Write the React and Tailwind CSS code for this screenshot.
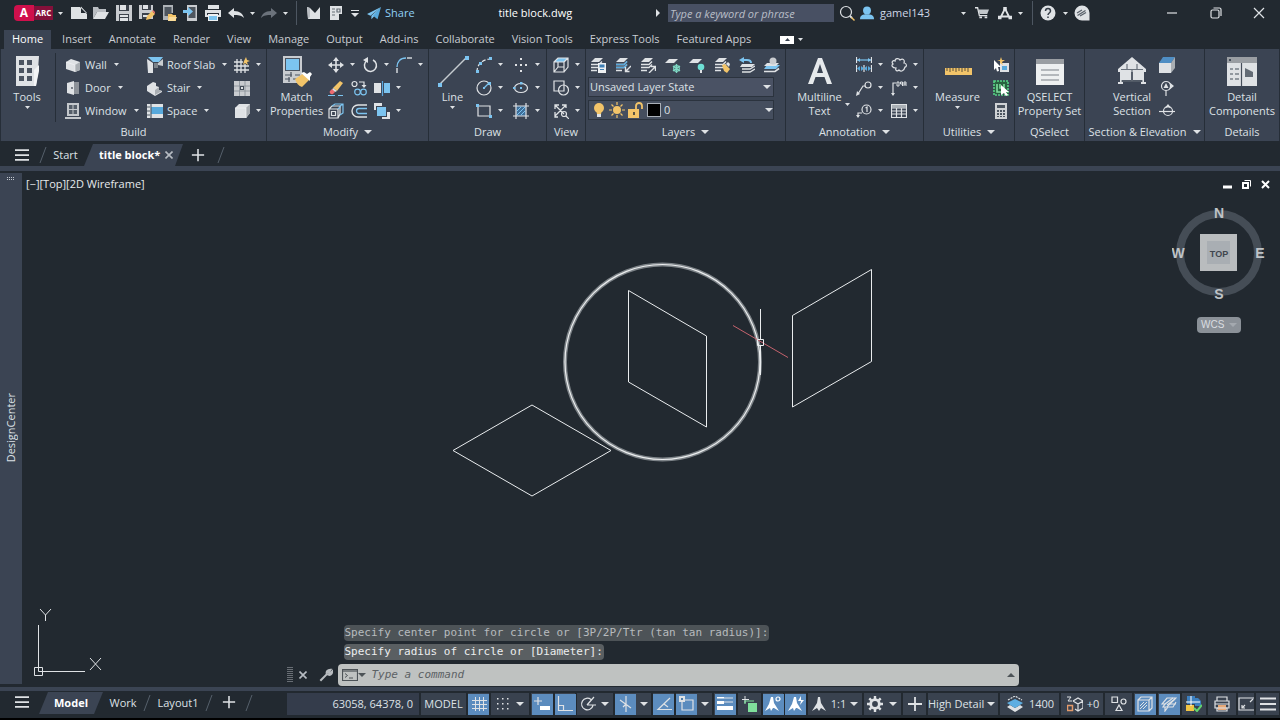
import { useState } from 'react';

const LIGHT = '#dfe2e5';
const BLUE = '#7cc4f0';
const GOLD = '#f2c469';

const F = ({ d, c = LIGHT }) => <path d={d} fill={c} stroke="none" />;
const S = ({ d, c = LIGHT, w = 1.2 }) => <path d={d} fill="none" stroke={c} strokeWidth={w} />;
const C = ({ x, y, r, c = LIGHT, f = 'none' }) => <circle cx={x} cy={y} r={r} stroke={c} fill={f} strokeWidth={1.2} />;

const layerStack = (
  <>
    <F d="M5 1h8L9 5H1z" />
    <S d="M1 7.500h8l3-3M1 10.500h8l3-3M1 13.500h6" w={1.4} />
  </>
);

// 16 x 16 artwork
const icons = {
  newFile: <F d="M0 2h9l7 7v5H0zM10 1.500v6.500h6z" />,
  open: <><F d="M0 14V2h5l1 2h7v3H4z" c="#b9bdc2" /><F d="M4 7h12l-4 7H0z" /></>,
  save: <><F d="M0 0h16v16H0z" c="#c9ccd0" /><F d="M3 0h10v6H3zM3 9h10v7H3z" c="#3c424b" /><F d="M4 0h6v5H4zM4 10h8v2H4zM4 13h8v3H4z" /></>,
  saveAs: <><F d="M0 0h14v14H0z" c="#c9ccd0" /><F d="M3 0h9v5H3zM3 8h8v6H3z" c="#3c424b" /><F d="M4 0h5v4H4zM4 10h5v2H4z" /><F d="M7 15l1-4 5-5 3 3-5 5z" c={GOLD} /><F d="M13 6l1-1 3 3-1 1z" c="#e8746c" /></>,
  openWeb: <><F d="M2 0h10v8H8v7H2z" c="#aeb3b8" /><F d="M3.500 2h7v9h-7z" c="#4e565f" /><F d="M7 9h4l1 1h3v6H7z" c={GOLD} /><F d="M8 12h8l-2 4H7z" c="#f9dc9b" /></>,
  saveWeb: <><F d="M4 0h10v16H4z" c="#c9ccd0" /><F d="M5.500 2h7v11h-7z" c="#4e565f" /><F d="M0 5h5V2l5 4.500L5 11V8H0z" c={BLUE} /></>,
  print: <><F d="M3 0h11v4H3zM0 5h16v7H0z" /><F d="M2 8h12v2H2z" c="#2b323b" /><F d="M3 9h10v7H3z" c="#eef1f3" /><F d="M4 11h8v4H4z" c={BLUE} /></>,
  undo: <F d="M0 8l6-5v3c6 0 9 3 10 7-3-3-6-3-10-3v3z" />,
  redo: <F d="M16 8l-6-5v3C4 6 1 9 0 13c3-3 6-3 10-3v3z" c="#6b727b" />,
  ribbonM: <><F d="M1 2l3 1 5 5 5-6v12H2z" /><F d="M1 2l3 1v9l-2 2z" c="#b9bdc2" /></>,
  sheet: <><F d="M2 1h12v8h-3v6H2z" /><S d="M4 4h3M4 7h3M4 10h3M9 4h3v3H9z" c="#666e77" /></>,
  share: <><F d="M16 1L0 9l4 2zM16 1L5 11v4l3-3z" c={BLUE} /><F d="M16 1L7 11l5 4z" c="#58a9dc" /></>,
  search: <><C x={7} y={7} r={5.5} /><S d="M11 11l2 2" w={2} /><F d="M13 12l3 3-1 1-3-3z" c={GOLD} /></>,
  user: <><circle cx="8" cy="5" r="4.500" fill={BLUE} stroke="none" /><F d="M0 15c0-4 3-5.500 8-5.500s8 1.500 8 5.500z" c={BLUE} /></>,
  cart: <><S d="M0 2h3l2 9h9" w={1.5} /><F d="M4 4h12l-2 5H5z" c="#c2c7cb" /><F d="M5 12h3v2H5zM11 12h3v2h-3z" /></>,
  autodesk: <><S d="M8 3L3 13M8 3l5 10M3 12h10" w={2.2} /><F d="M6 1h4v4H6zM0 11h4v4H0zM12 11h4v4h-4z" /></>,
  help: <><circle cx="8" cy="8" r="7.500" fill={LIGHT} stroke="none" /><S d="M5.500 6c0-3.500 5-3.500 5 0 0 2-2.500 2-2.500 4M8 11.500v1.500" c="#343c46" w={1.5} /></>,
  community: <><F d="M8 0.500a7.500 7.500 0 0 1 7.500 7.500v7.500H8a7.500 7.500 0 0 1 0-15z" /><S d="M3 8l5-3M3.500 10.500l8-5M6 11l6-3.500" c="#5a626b" w={1.4} /></>,
  minimize: <S d="M3 8h10" />,
  restore: <><rect x="3" y="5" width="8" height="8" rx="1.500" /><S d="M5.500 3h6c1 0 1.500.5 1.500 1.500V11" /></>,
  close: <S d="M3 3l10 10M13 3L3 13" />,
  wall: <><F d="M1 5l5-3 9 3v8l-5 2-9-3z" /><F d="M10 8l5-3v8l-5 2z" c="#a9aeb3" /><S d="M1 5l9 3v7" c="#f3f4f5" w={0.6} /></>,
  door: <><F d="M6 2h8v12H6z" c="#8d9299" /><F d="M2 3l7-2v14l-7-2z" /><circle cx="7" cy="8" r="0.900" fill="#4b535e" stroke="none" /></>,
  window: <><F d="M2 0h12v13H2zM0 14h16v2H0z" c="#c3c7cb" /><F d="M4 2h3.500v4H4zM8.500 2H12v4H8.500zM4 7h3.500v4H4zM8.500 7H12v4H8.500z" c="#555e69" /></>,
  roof: <><F d="M1 0h15l-4 5H6z" c={BLUE} /><F d="M0 2l6 4v10H1z" /><F d="M7 6h4v5H7z" c="#7b828a" /><F d="M11 6l5-4v7l-5-1z" c="#c9cdd0" /></>,
  stair: <><F d="M0 6l6-4 3 1v3l3 1v3l3 1v1l-7 4-8-5z" /><F d="M8 10l4-3v3l3 1-7 4z" c="#a9aeb3" /></>,
  space: <><F d="M0 1h16v14H0z" /><F d="M4 4h12v7H4z" c="#58a9dc" /><S d="M4 1v14" c="#555e69" /><S d="M0 4h3M0 8h3M0 12h3" c="#555e69" /></>,
  gridBolt: <><S d="M3 2v14M7 2v14M11 7v9M0 5h9M0 9h15M0 13h15" w={1.3} /><F d="M12 0l1 3 3 1-3 1 1 3-3-2-2 2 1-4z" c={GOLD} /></>,
  ceiling: <><F d="M0 1h16v15H0z" c="#c9ccd0" /><S d="M5.500 1v15M11 1v15M0 6h16M0 11h16" c="#878e96" w={0.8} /><F d="M6 6h4v4H6z" c="#454e5a" /><F d="M7 7h2v2H7z" /></>,
  box: <><F d="M1 5l4-4h11v9l-4 5H1z" /><F d="M12 5l4-4v9l-4 5z" c="#a9aeb3" /><S d="M1 5h11v10" c="#f4f5f6" w={0.7} /></>,
  move: <><S d="M8 2v12M2 8h12" w={1.6} /><F d="M8 0l3 4H5zM8 16l3-4H5zM0 8l4-3v6zM16 8l-4-3v6z" /></>,
  rotate: <><S d="M5 3.500A6 6 0 1 0 11 3" w={1.5} /><F d="M6 0v6L1 3z" /></>,
  fillet: <><S d="M1 16v-5" w={1.4} /><S d="M1 10C1 5 4 1 10 1" c={BLUE} w={1.4} /><S d="M11 1h5" w={1.4} /></>,
  erase: <><F d="M5 8l7-7 3 2-6 8z" c={GOLD} /><F d="M5 8l4 3-2 1-3-2z" /><F d="M4 9l3 3-2 2c-3 1-4-2-3-3z" c="#ee6a70" /><S d="M0 15.500h7M10 15.500h5" c={BLUE} w={1} /></>,
  copy: <><C x={3.5} y={4} r={2.5} /><S d="M8 2h5v3" /><F d="M10.500 5h5L13 8z" /><C x={6.500} y={12} r={2.8} c={BLUE} /><C x={12.500} y={12} r={2.8} c={BLUE} /></>,
  mirror: <><F d="M0 3h7v10H0z" /><F d="M10 3h6v10h-6z" c={BLUE} /><S d="M8.500 1v15" c="#5aa6db" /></>,
  explode: <><S d="M1 6h9v9H1zM1 6l3-3h8v8l-2 4M3.500 8.500h4v4h-4z" /><S d="M4 3l3-2h8v9l-3 2M12 3l3-2M10 6l3-3" c={BLUE} /></>,
  offset: <><S d="M16 2H7a5.500 5.500 0 0 0 0 12h9" w={1.4} /><S d="M16 5.500H8a2.500 2.500 0 0 0 0 5h8" c={BLUE} w={1.3} /></>,
  order: <><F d="M0 0h8v7H0zM8 9h8v7H8z" /><F d="M2 3h11v11H2z" c="#3b4453" /><F d="M3 4h9v9H3z" c={BLUE} /></>,
  arc: <><path d="M1 15C1 8 5 3 14 2" strokeDasharray="4 2" /><F d="M0 13h3v3H0zM3 5h3v3H3zM13 0h3v3h-3z" c={BLUE} /></>,
  points: <F d="M7 1h2v2H7zM2 7h2v2H2zM12 7h2v2h-2zM7 13h2v2H7zM7 7h2v2H7z" />,
  circle: <><C x={8} y={8} r={7} /><F d="M7 7h2v2H7zM12 2h3v3h-3z" c={BLUE} /><S d="M8 8l5-5" c={BLUE} /></>,
  ellipse: <><ellipse cx="8" cy="8" rx="6.500" ry="4.500" /><F d="M7 7h2v2H7zM0 7h2.500v2H0zM7 2h2.500v2.500H7z" c={BLUE} /></>,
  rect: <><S d="M2 3h12v10H2z" /><F d="M0 1h3v3H0zM13 12h3v3h-3z" c={BLUE} /></>,
  hatch: <><F d="M3 3h10v10H3z" c="#3f6f9a" /><S d="M3 0v16M13 0v16M0 3h16M0 13h16" /><S d="M4 8l4-4M4 12l8-8M8 12l4-4" c={BLUE} w={1} /></>,
  cube: <><F d="M1 5l4-4h10l-4 4z" c={BLUE} /><S d="M1 5h10v10H1zM1 5l4-4h10v9l-4 5M15 1l-4 4M5 5v5h6M5 10l-4 5" /></>,
  region: <><S d="M1 1h10v10H1z" /><C x={10.500} y={10} r={5} /></>,
  extents: <><S d="M2 2l9 9M13 2L2 13M2 6V2h4M9 2h4v3M2 9v5h3" w={1.3} /><C x={11} y={11} r={2.5} /><S d="M13 13l3 3" /></>,
  layerProps: <>{layerStack}<F d="M8 6h8v10H8z" c="#eef0f2" /><F d="M9.500 7.500h5v3h-5zM10 12h4v1h-4z" c="#3f7fb5" /></>,
  layerOff: <>{layerStack}<S d="M1 7.500h8l3-3M1 10.500h8l3-3" c="#58a9dc" w={1.4} /><S d="M16 9l-5 5M10.500 10v4.500h4" w={1.4} /></>,
  layerOn: <>{layerStack}<S d="M9 16l6-6M11 9.500h4.500V14" w={1.4} /></>,
  layerFreeze: <><F d="M4 2h9L9 6H0z" /><S d="M11.500 7v9M8 9l7 5M15 9l-7 5" c="#7fd8c4" w={1.4} /><C x={11.5} y={11.5} r={2.8} c="#7fd8c4" /></>,
  layerBulb: <><F d="M4 2h9L9 6H0z" /><circle cx="12" cy="10" r="3.300" fill="#6ee0d6" stroke="none" /><F d="M11 13h2v3h-2z" /></>,
  layerMatch: <>{layerStack}<F d="M8 8l3-1 5 5-3 4-3-2z" c={GOLD} /><F d="M12 7l2-2 2 2-1 3z" /></>,
  layerPrev: <><F d="M3 7h13l-3 3H1z" /><S d="M3 12h8l5-3M3 15h8l5-3" w={1.4} /><S d="M2 3h6c3 0 4 1 4 3" c={BLUE} w={2} /><F d="M5 0v6L0 3z" c={BLUE} /></>,
  layerIso: <><S d="M0 14.500h11l4-3" w={1.6} /><F d="M3 8h13l-4 4H0z" c={BLUE} /><F d="M3 6h12l-3 3H0z" /><circle cx="9" cy="4" r="3.500" fill="#c9ccd0" stroke="none" /></>,
  bulb: <><circle cx="8" cy="6" r="5" fill={GOLD} stroke="none" /><F d="M5 8h6l-1 4H6z" c={GOLD} /><F d="M6 12h4v3H6z" /></>,
  sun: <><circle cx="8" cy="8" r="4" fill={GOLD} stroke="none" /><S d="M8 0v3M8 13v3M0 8h3M13 8h3M2.500 2.500l2 2M11.500 11.500l2 2M2.500 13.500l2-2M11.500 4.500l2-2" c={GOLD} /></>,
  unlock: <><F d="M1 7h11v9H1z" c={GOLD} /><S d="M9 7V4c0-4 6-4 6 0v3" c={GOLD} w={1.8} /><F d="M6 10h2v3H6z" c="#5a5342" /></>,
  dim: <><S d="M0 3h16" c={BLUE} /><F d="M4 1v4L1 3zM12 1v4l3-2z" c={BLUE} /><S d="M.5 0v6M15.500 0v6M.5 8v7M15.500 8v7M8 8v7" /><F d="M4 9v5l-3-2.500zM12 9v5l3-2.500zM5 9v5l3-2.500zM11 9v5l-3-2.500z" c="#58a9dc" /></>,
  leader: <><C x={12} y={5} r={3} /><S d="M9 6H7l-5 8" /><F d="M0 16l1-5 3 3z" /></>,
  balloon: <><C x={10.500} y={6.500} r={4.5} /><S d="M9.500 5l1.500-1v5M2 14v-4h4" /><F d="M0 12h4l-2 3z" /></>,
  cloud: <S d="M4 4c0-3 4-3 5-1 3-2 5 0 4 3 3 0 3 4 1 4-1 4-4 5-6 3-2 2-4 0-3-2C1 11 0 8 2 7 0 5 2 3 4 4z" />,
  keynote: <><S d="M2 15V3h3" /><F d="M0 13h4l-2 3z" /><S d="M6 2h2v4H6zM9.500 2h2v4M9.500 2v2h2M13 6V2h2v4M13 4h2" w={1} /></>,
  table: <><S d="M0.500 1.500h15v13H.5zM.5 5h15M.5 8h15M.5 11h15M5.500 5v9.500M10.500 5v9.500" /><F d="M1 2h14v3H1z" c="#aab0b6" /></>,
  quickSelect: <><F d="M7 6h9v9H7z" /><F d="M9 9h5v4H9z" c="#58a9dc" /><F d="M1 3l7 7H5l1 4-2 .5L3 11l-2 2z" c="#fff" /><F d="M8 0l1 3h3l-3 2 1 3-3-2 0-2-3 0 3-1z" c={GOLD} /></>,
  selectAll: <><F d="M1 1h14v13H1z" c="#28633f" /><path d="M1 1h14v14H1z" stroke="#56d386" strokeWidth="1.600" strokeDasharray="2 1" /><S d="M4 4v8h5M7 4v4h4V4" c="#7fdc9f" w={1.6} /><F d="M8 5l8 7-3 0 2 3-2 1-2-3-3 2z" c="#fff" /></>,
  calc: <><F d="M2 0h12v16H2z" c="#cfd2d5" /><F d="M4 2h8v3H4zM4 7h2v2H4zM7 7h2v2H7zM10 7h2v2h-2zM4 10h2v2H4zM7 10h2v2H7zM10 10h2v2h-2zM4 13h2v1H4zM7 13h2v1H7zM10 13h2v1h-2z" c="#4c5560" /></>,
  sectionBox: <><F d="M0 6h12v10H0z" /><F d="M0 6l4-6h12l-4 6z" c="#4f8ec4" /><F d="M12 6l4-6v11l-4 5z" c="#a9aeb3" /></>,
  mark: <><C x={7} y={6} r={4.5} /><F d="M9 1l6 5-6 5c3-3 3-7 0-10z" /><F d="M4.500 8L7 3l2.500 5z" /><S d="M7 10.500V16" /></>,
  elevMark: <><C x={9} y={8} r={4.5} /><S d="M0 8.500h16" /><F d="M5 6l4-5 4 5c-3-2-5-2-8 0z" /></>,
  wrench: <S d="M1.500 14.500L9 7M9 7c-1-3 1-5 4-5l-2 3 1.500 1.500L15 4c0 3-2 5-6 3z" c="#b7bbbf" w={2.4} />,
  console: <><S d="M.5 2.500h15v11H.5z" c="#4d5357" /><S d="M1 4h14" c="#4d5357" /><S d="M3 6.500l2.500 2L3 10.500M7 11h4" c="#4d5357" w={1} /></>,
  stGrid: <S d="M4.500 1v14M8.500 1v14M12.500 1v14M1 4.500h15M1 8.500h15M1 12.500h15" w={1} />,
  stSnap: <F d="M2 2h1.500v1.500H2zM7 2h1.500v1.500H7zM12 2h1.500v1.500H12zM2 7h1.500v1.500H2zM7 7h1.500v1.500H7zM12 7h1.500v1.500H12zM2 12h1.500v1.500H2zM7 12h1.500v1.500H7zM12 12h1.500v1.500H12z" />,
  stDyn: <><S d="M4 1v8M0 5h8" /><F d="M6 10h10v4H6z" c="#fff" /></>,
  stOrtho: <S d="M1.500 0v14.500H16M1.500 9.500h5v5" />,
  stPolar: <S d="M13 9.500A5.800 5.800 0 1 1 11 3.500M7 9h9M7 9l7-8" />,
  stIso: <S d="M8 0v16M2 4l11 8M8 8l-3 3" />,
  stTrack: <S d="M14 2L2 13.500h14M8 8l4 3" />,
  stSnapObj: <><S d="M4 4h10v10H3V6" /><F d="M0 0h6v6H0z" /><F d="M2 2h2v2H2z" c="#4f7fae" /></>,
  stWeight: <><F d="M0 1h7v1.500H0zM0 5h7v3H0zM0 10h16v4H0z" c="#fff" /><S d="M7 2h9M7 6h9" /></>,
  stTransp: <><S d="M3 0v7M0 3.500h7" w={1} /><S d="M3 8V5h9" c="#7fe09c" /><F d="M6 7h9v9H6z" c="#7fe09c" /></>,
  stAnno: <><F d="M6 1l2 0 1 6 5 8-5-3-1 0-2 3-1-3-5 3 4-7z" c="#fff" /><C x={13} y={3} r={2} c="#fff" /></>,
  stAnno2: <><F d="M6 1l2 0 1 6 5 8-5-3-1 0-2 3-1-3-5 3 4-7z" c="#fff" /><F d="M13 0l-3 5h3l-1 4 4-5h-3z" c="#fff" /></>,
  stAnno3: <F d="M7 1h2l1 6 5 8-5-3-2 3-2-3-5 3 5-8z" />,
  gear: <><circle cx="8" cy="8" r="4.300" stroke={LIGHT} strokeWidth="2.800" /><S d="M8 0v3M8 13v3M0 8h3M13 8h3M2.300 2.300l2 2M11.700 11.700l2 2M2.300 13.700l2-2M11.700 4.300l2-2" w={2.4} /></>,
  plus: <S d="M8 1v14M1 8h14" w={1.8} />,
  elevPlane: <><F d="M0 11l3-2 5 3 5-3 3 2-8 5z" /><F d="M0 7l8-4 8 4-8 5z" c="#5eaee2" /><path d="M1 4l7-4 7 4" strokeDasharray="2 1" /></>,
  replaceZ: <><S d="M6 5l5-3 5 3v7l-5 3-3-2M6 5l5 3 5-3M11 8v7" /><S d="M0 1h4L1 5h4" w={1} /><S d="M.5 9.500h5v5h-5z" c="#e29a6b" w={1.5} /></>,
  shapes: <><S d="M1 1h5.500v5.500H1zM8 9l3 5.500H5z" /><C x={12.500} y={5.500} r={2.500} /></>,
  hatchBox: <><S d="M1 4h11v11H1zM1 4l3-3h11v11l-3 3M12 4l3-3" /><S d="M3 10l4-4M3 13l7-7M6 13l4-4" w={1} /></>,
  surface: <><S d="M6 2h9L6 11H2l2-3H1z" /><S d="M4 8l8-6M6 9l8-6M15 6l-3 5H7l-3 4v-4M9 8h6" /></>,
  cad: <><F d="M1 0h8v8H1z" c="#3c7fbf" /><F d="M9 2h3l3 3v5H9z" c="#3c7fbf" /><F d="M0 9h8v6H0z" c="#f0c445" /><S d="M5 0v10M0 6h14" c="#fff" w={1} /><S d="M8 12l3 3 5-6" c="#62d46e" w={2} /></>,
  printer: <><S d="M3 5V1h10v4M1 5h14v7H1zM1 8h14" /><F d="M4 9h8v5H4z" c="#e6a877" /><S d="M3 12h10v3H3z" /></>,
  isolate: <><S d="M16 2H1v12h15" /><S d="M4 12l3-3M4 9v3h3M12 6l3-3" /></>,
  menu: <S d="M0 2.500h16M0 8h16M0 13.500h16" w={2} />,
};

// 32 x 32 artwork
const bigIcons = {
  tools: <><F d="M5 1h23l-1 14-2 16H5z" /><F d="M23 15l5-5v6l-3 15h-2z" c="#f4f5f6" /><F d="M8 5h5v5H8zM16 5h5v5h-5zM8 13h5v5H8zM16 13h5v5h-5zM8 21h5v5H8zM16 21h5v5h-5z" c="#4b5461" /></>,
  match: <><F d="M2 1h19v27H2z" c="#c9ccd0" /><F d="M4 3h15v13H4z" c="#4b5461" /><F d="M5 4h13v11H5z" c={BLUE} /><S d="M4 20h7M14 20h5M4 24h5M12 24h5M10 17v5M8 22v5" c="#4b5461" /><F d="M14 24l9-6 6 6-8 8c-3-1-6-4-7-8z" c={GOLD} /><F d="M20 18l3-1 3 2 3-2 2 2-2 3 0 4z" c="#fff" /></>,
  line: <><S d="M3 29L29 3" c="#c5cbd0" w={1.4} /><F d="M1 28h4v4H1zM28 1h4v4h-4z" c={BLUE} /></>,
  mtext: <path d="M4 29L14 3h4l10 26h-5l-2.500-7h-9L9 29zM13 18h6l-3-9z" fill="#e6e9ec" stroke="none" fillRule="evenodd" />,
  measure: <><F d="M3 13h27v7H3z" c={GOLD} /><S d="M5 13v3M8 13v4M11 13v3M14 13v4M17 13v3M20 13v4M23 13v3M26 13v4" c="#5c5038" w={1} /></>,
  qselect: <><F d="M2 4h28v26H2z" c="#eef0f1" /><F d="M2 4h28v5H2z" c="#9a9ea3" /><S d="M7 15h18M7 20h18M7 25h18" c="#7a8087" /></>,
  house: <><F d="M16 2l14 12v3h-2v10h2v2h-5v-2h1V17H6v10h1v2H2v-2h2V17H2v-3z" /><F d="M6 16h9v9H6zM17 16h9v9h-9z" /><S d="M5 14.500h22M11 9v6M21 9v6M16 15v11M5 26h22" c="#69717b" /></>,
  detail: <><F d="M1 2h30v29H1z" /><F d="M1 2h30v6H1z" c="#9a9ea3" /><F d="M3 4h2v2H3z" c="#454e5a" /><S d="M15.500 8v23" c="#454e5a" /><F d="M19 13l8 4v5h-8z" c="#636b75" /><S d="M4 14h3M9 14h4M4 19h3M9 19h4M4 24h3M9 24h4" c="#454e5a" /></>,
};

const sizes = { 14: 'size-3.5', 16: 'size-4' };

const Icon = ({ name, size = 16 }) => (
  <svg className={`${sizes[size]} shrink-0`} viewBox="0 0 16 16" fill="none" stroke={LIGHT} strokeWidth="1.200" aria-hidden="true">
    {icons[name]}
  </svg>
);

const Caret = ({ wide = false, color = LIGHT }) => (
  <svg className={wide ? 'h-1 w-2 shrink-0' : 'h-[3px] w-[5px] shrink-0'} viewBox="0 0 8 4" preserveAspectRatio="none" aria-hidden="true">
    <path d="M0 0h8L4 4z" fill={color} />
  </svg>
);

const IconButton = ({ name, label, width = 'w-[22px]', size }) => (
  <button aria-label={label || name} className={`flex h-5 shrink-0 items-center justify-center ${width}`}>
    <Icon name={name} size={size} />
  </button>
);

const CaretButton = ({ width = 'w-3' }) => (
  <button aria-label="More" className={`flex h-5 shrink-0 items-center justify-center ${width}`}>
    <Caret />
  </button>
);

const Divider = () => <span className="h-6 w-px shrink-0 bg-[#4d5661]" />;

const TitleBar = () => (
  <header className="flex h-[26px] shrink-0 items-center pl-3.5">
    <button className="flex h-4 items-center text-white">
      <span className="flex h-4 w-5 items-center justify-center rounded-l-sm bg-[#d0104c] text-xs font-bold">A</span>
      <span className="flex h-3.5 w-[19px] items-center justify-center bg-[#84103a] text-[8px] font-bold">ARC</span>
    </button>
    <CaretButton width="w-3.5" />
    <IconButton name="newFile" label="New" width="w-[23px]" />
    <IconButton name="open" label="Open" />
    <IconButton name="save" label="Save" width="w-[23px]" />
    <IconButton name="saveAs" label="Save As" width="w-[23px]" />
    <IconButton name="openWeb" label="Open from Web" />
    <IconButton name="saveWeb" label="Save to Web" />
    <IconButton name="print" label="Plot" />
    <IconButton name="undo" label="Undo" width="w-[23px]" />
    <CaretButton width="w-2.5" />
    <IconButton name="redo" label="Redo" width="w-[23px]" />
    <CaretButton width="w-2.5" />
    <span className="w-1.5" />
    <Divider />
    <span className="w-1.5" />
    <IconButton name="ribbonM" label="Project Navigator" />
    <IconButton name="sheet" label="Sheet Set Manager" />
    <button aria-label="Customize" className="flex w-4 flex-col items-center gap-0.5">
      <span className="h-px w-2 bg-[#dfe2e5]" />
      <Caret wide />
    </button>
    <a href="#share" className="ml-1 flex items-center gap-1 text-[#8fd0f5]">
      <Icon name="share" size={14} />
      Share
    </a>
    <h1 className="flex-1 text-center text-white">title block.dwg</h1>
    <svg className="mr-2 h-2 w-1" viewBox="0 0 4 8" aria-hidden="true"><path d="M0 0l4 4-4 4z" fill={LIGHT} /></svg>
    <input
      aria-label="Search"
      placeholder="Type a keyword or phrase"
      className="h-[18px] w-[166px] bg-[#485063] px-0.5 italic outline-none placeholder:text-[#b9bec7]"
    />
    <IconButton name="search" label="Search" width="w-[26px]" />
    <button className="flex items-center gap-1.5 text-[#cfd6e6]">
      <Icon name="user" size={14} />
      <span className="w-[79px] text-left">gamel143</span>
    </button>
    <CaretButton width="w-2" />
    <IconButton name="cart" label="Store" width="w-[29px]" size={14} />
    <IconButton name="autodesk" label="Apps" width="w-[18px]" size={14} />
    <CaretButton width="w-3" />
    <span className="w-1.5" />
    <Divider />
    <IconButton name="help" label="Help" width="w-[30px]" />
    <CaretButton width="w-1" />
    <IconButton name="community" label="Community" width="w-[30px]" />
    <span className="w-[53px]" />
    <IconButton name="minimize" label="Minimize" width="w-[44px]" />
    <IconButton name="restore" label="Restore" width="w-[43px]" />
    <IconButton name="close" label="Close" width="w-[43px]" />
  </header>
);

const ribbonTabs = ['Home', 'Insert', 'Annotate', 'Render', 'View', 'Manage', 'Output', 'Add-ins', 'Collaborate', 'Vision Tools', 'Express Tools', 'Featured Apps'];

const RibbonTabs = () => {
  const [active, setActive] = useState('Home');

  return (
    <nav className="flex h-[23px] shrink-0 items-end pl-1">
      {ribbonTabs.map((tab) => (
        <button
          key={tab}
          onClick={() => setActive(tab)}
          className={
            tab === active
              ? 'mr-[3px] h-[19px] bg-[#3b4453] px-2 pb-px text-white'
              : 'h-[19px] pb-px pl-2 pr-[9px] text-[#c8ccd2]'
          }
        >
          {tab}
        </button>
      ))}
      <button aria-label="Minimize ribbon" className="ml-5 flex h-[19px] items-center gap-1">
        <span className="flex h-2 w-3.5 items-center justify-center bg-white">
          <span className="rotate-180"><Caret color="#39424f" /></span>
        </span>
        <Caret />
      </button>
    </nav>
  );
};

const Panel = ({ title, width, menu = false, children }) => (
  <section className={`flex flex-col border-r border-[#262e38] pt-1 ${width}`}>
    <div className="flex h-[69px]">{children}</div>
    <h2 className="flex h-[19px] items-center justify-center gap-1.5 whitespace-nowrap">
      {title}
      {menu && <Caret wide />}
    </h2>
  </section>
);

const BigButton = ({ icon, lines, width, menu = false }) => (
  <button className={`flex shrink-0 flex-col items-center ${width}`}>
    <svg className="mb-[3px] mt-0.5 size-8" viewBox="0 0 32 32" fill="none" aria-hidden="true">{bigIcons[icon]}</svg>
    {lines.map((line) => (
      <span key={line} className="whitespace-nowrap leading-[14px]">{line}</span>
    ))}
    {menu && <span className="mt-0.5 flex"><Caret /></span>}
  </button>
);

const Command = ({ icon, label }) => (
  <button className="flex h-[23px] items-center whitespace-nowrap">
    <Icon name={icon} />
    <span className="ml-1 mr-[7px]">{label}</span>
    <Caret />
  </button>
);

const Tool = ({ icon, menu = true, width = '' }) => (
  <button aria-label={icon} className={`flex h-[23px] shrink-0 items-center gap-1.5 ${width}`}>
    <Icon name={icon} />
    {menu && <Caret />}
  </button>
);

const Ribbon = () => (
  <div className="flex h-[92px] shrink-0 border-l border-[#262e38] bg-[#3b4453]">
    <Panel title="Build" width="w-[266px]">
      <BigButton icon="tools" lines={['Tools']} width="w-[52px]" menu />
      <div className="ml-0.5 flex border-l border-[#262e38] pl-[9px]">
        <div className="w-[82px]">
          <Command icon="wall" label="Wall" />
          <Command icon="door" label="Door" />
          <Command icon="window" label="Window" />
        </div>
        <div className="w-[87px]">
          <Command icon="roof" label="Roof Slab" />
          <Command icon="stair" label="Stair" />
          <Command icon="space" label="Space" />
        </div>
        <div>
          <Tool icon="gridBolt" />
          <Tool icon="ceiling" menu={false} />
          <Tool icon="box" />
        </div>
      </div>
    </Panel>

    <Panel title="Modify" width="w-[162px]" menu>
      <BigButton icon="match" lines={['Match', 'Properties']} width="w-[59px]" />
      <div className="ml-0.5">
        <div className="flex">
          <Tool icon="move" width="w-[34px]" />
          <Tool icon="rotate" width="w-[34px]" />
          <Tool icon="fillet" />
        </div>
        <div className="flex gap-[7px]">
          <Tool icon="erase" menu={false} />
          <Tool icon="copy" menu={false} />
          <Tool icon="mirror" />
        </div>
        <div className="flex gap-[7px]">
          <Tool icon="explode" menu={false} />
          <Tool icon="offset" menu={false} />
          <Tool icon="order" />
        </div>
      </div>
    </Panel>

    <Panel title="Draw" width="w-[118px]">
      <BigButton icon="line" lines={['Line']} width="w-[47px]" menu />
      <div className="grid grid-cols-[37px_30px]">
        <Tool icon="arc" />
        <Tool icon="points" />
        <Tool icon="circle" />
        <Tool icon="ellipse" />
        <Tool icon="rect" />
        <Tool icon="hatch" />
      </div>
    </Panel>

    <Panel title="View" width="w-[39px]">
      <div className="ml-1.5">
        <Tool icon="cube" />
        <Tool icon="region" />
        <Tool icon="extents" />
      </div>
    </Panel>

    <Panel title="Layers" width="w-[200px]" menu>
      <div className="ml-0.5 w-[186px]">
        <div className="flex h-[23px] w-[192px] justify-between pl-0.5">
          {['layerProps', 'layerOff', 'layerOn', 'layerFreeze', 'layerBulb', 'layerMatch', 'layerPrev', 'layerIso'].map((name) => (
            <Tool key={name} icon={name} menu={false} />
          ))}
        </div>
        <label className="mt-px flex h-5 items-center border border-[#2b333e] bg-[#4a5264] pr-0.5">
          <select aria-label="Layer state" className="flex-1 appearance-none pl-px outline-none">
            <option>Unsaved Layer State</option>
          </select>
          <Caret wide />
        </label>
        <label className="mt-[3px] flex h-5 items-center gap-0.5 border border-[#2b333e] bg-[#454e5e] pl-0.5">
          <Icon name="bulb" />
          <Icon name="sun" />
          <Icon name="unlock" />
          <span className="ml-0.5 size-3.5 border border-[#aab0b8] bg-black" />
          <select aria-label="Layer" className="flex-1 appearance-none pl-px outline-none">
            <option>0</option>
          </select>
          <Caret wide />
        </label>
      </div>
    </Panel>

    <Panel title="Annotation" width="w-[138px]" menu>
      <BigButton icon="mtext" lines={['Multiline', 'Text']} width="w-[67px]" />
      <div className="-ml-2 flex w-[11px] items-end pb-4"><Caret /></div>
      <div className="grid grid-cols-[35px_30px]">
        <Tool icon="dim" />
        <Tool icon="cloud" />
        <Tool icon="leader" />
        <Tool icon="keynote" />
        <Tool icon="balloon" />
        <Tool icon="table" />
      </div>
    </Panel>

    <Panel title="Utilities" width="w-[91px]" menu>
      <BigButton icon="measure" lines={['Measure']} width="w-[67px]" menu />
      <div className="ml-0.5">
        <Tool icon="quickSelect" menu={false} />
        <Tool icon="selectAll" menu={false} />
        <Tool icon="calc" menu={false} />
      </div>
    </Panel>

    <Panel title="QSelect" width="w-[70px]">
      <BigButton icon="qselect" lines={['QSELECT', 'Property Set']} width="w-[69px]" />
    </Panel>

    <Panel title="Section & Elevation" width="w-[120px]" menu>
      <BigButton icon="house" lines={['Vertical', 'Section']} width="w-[74px] ml-2.5" />
      <div className="-ml-2.5">
        <Tool icon="sectionBox" menu={false} />
        <Tool icon="mark" menu={false} />
        <Tool icon="elevMark" menu={false} />
      </div>
    </Panel>

    <Panel title="Details" width="flex-1">
      <BigButton icon="detail" lines={['Detail', 'Components']} width="w-full" />
    </Panel>
  </div>
);

const Slash = () => (
  <svg className="h-4 w-2 shrink-0" viewBox="0 0 8 16" aria-hidden="true"><path d="M7 0L1 16" stroke="#56606b" /></svg>
);

const DocumentTabs = () => (
  <nav className="flex h-[25px] shrink-0 items-center pl-[11px] pt-[3px]">
    <IconButton name="menu" label="Drawing menu" size={14} />
    <span className="w-1.5" />
    <Slash />
    <button className="w-[37px] text-center">Start</button>
    <div className="flex h-[22px] w-[99px] items-center justify-between bg-[#3b4453] pl-[15px] pr-2.5 font-bold text-white [clip-path:polygon(9px_0,100%_0,calc(100%-8px)_100%,0_100%)]">
      title block*
      <button aria-label="Close tab">
        <svg className="size-2" viewBox="0 0 8 8"><path d="M0.500 0.500l7 7M7.500 0.500l-7 7" stroke="#b7bcc3" strokeWidth="1.600" /></svg>
      </button>
    </div>
    <IconButton name="plus" label="New tab" width="w-[30px]" size={14} />
    <span className="w-1" />
    <Slash />
  </nav>
);

const Drawing = () => (
  <svg className="absolute left-0 top-0 h-[514px] w-[1258px]" viewBox="22 173 1258 514" fill="none" aria-hidden="true">
    <g stroke="#e9ecee" strokeWidth="1">
      <path d="M792.500 315.500L871.500 269.500v92L792.500 407z" />
      <path d="M628.500 290.500L706.500 336v91L628.500 382z" />
      <path d="M453 450.500L532 405l79 45.500L532 496z" />
    </g>
    <circle cx="662.500" cy="362" r="97.500" stroke="#7d8388" strokeWidth="4" />
    <circle cx="662.500" cy="362" r="97.500" stroke="#eceeef" strokeWidth="1.200" />
    <path d="M733 325.500l55 32" stroke="#c4626d" />
    <path d="M760.500 309v30M760.500 345v30M757.500 339.500h6v6h-6z" stroke="#e9ecee" />
  </svg>
);

const ViewCube = () => (
  <div className="mr-3.5 mt-3.5 w-[94px] self-end font-['Liberation_Sans']">
    <svg className="h-[98px] w-[94px]" viewBox="0 0 94 98" aria-hidden="true">
      <circle cx="47" cy="48" r="39" fill="none" stroke="#454d56" strokeWidth="8" />
      <rect x="28" y="29" width="37" height="37" fill="#b9bcbe" />
      <rect x="35" y="36" width="23" height="23" fill="#a9aeb3" />
      <g fill="#bfc3c7" fontSize="14" fontWeight="bold" textAnchor="middle">
        <text x="47" y="13">N</text>
        <text x="47" y="94">S</text>
        <text x="6" y="53">W</text>
        <text x="88" y="53">E</text>
      </g>
      <text x="47" y="52" fill="#3f464e" fontSize="9" fontWeight="bold" textAnchor="middle">TOP</text>
    </svg>
    <button className="mx-auto mt-3.5 flex h-4 w-11 items-center justify-between rounded-sm bg-[#8b9198] px-1 text-[10px] text-[#dadde0]">
      WCS
      <svg className="h-1 w-2" viewBox="0 0 8 4" aria-hidden="true"><path d="M0 0h8L4 4z" fill="#a4a9af" /></svg>
    </button>
  </div>
);

const CommandLine = () => (
  <div className="mx-auto mb-px mt-auto w-[735px] font-['DejaVu_Sans_Mono',monospace]">
    <div className="flex flex-col items-start gap-[3px] pb-1 pl-[60px] text-[11px] leading-4">
      <p className="rounded-sm bg-[#4d5357] px-px text-[#b7bbbe]">Specify center point for circle or [3P/2P/Ttr (tan tan radius)]:</p>
      <p className="rounded-sm bg-[#5a5f62] px-px text-[#eceeef]">Specify radius of circle or [Diameter]:</p>
    </div>
    <div className="flex h-[22px] items-center">
      <svg className="ml-[3px] h-4 w-1.5" viewBox="0 0 6 16" aria-hidden="true">
        <path d="M1 0v16M3 0v16M5 0v16" stroke="#aeb3b8" strokeDasharray="1 1" />
      </svg>
      <button aria-label="Close command line" className="flex w-[21px] justify-center">
        <svg className="size-2" viewBox="0 0 8 8"><path d="M0.500 0.500l7 7M7.500 0.500l-7 7" stroke="#b7bcc3" strokeWidth="1.600" /></svg>
      </button>
      <IconButton name="wrench" label="Customize" width="w-6" size={14} />
      <label className="flex h-[22px] flex-1 items-center rounded-sm bg-[#bfc2c1] px-1">
        <Icon name="console" />
        <Caret wide color="#4d5357" />
        <input
          aria-label="Command"
          placeholder="Type a command"
          className="ml-1.5 flex-1 text-[11px] italic text-[#333] outline-none placeholder:text-[#5c6164]"
        />
        <span className="flex rotate-180"><Caret wide color="#4d5357" /></span>
      </label>
    </div>
  </div>
);

const Canvas = () => (
  <div className="flex min-h-0 flex-1 pt-0.5">
    <aside className="mb-[3px] flex w-[22px] shrink-0 flex-col items-center bg-[#3b4453] pt-1">
      <svg className="h-1 w-2" viewBox="0 0 8 4" aria-hidden="true">
        <path d="M0 .5h8M0 2.500h8" stroke="#c2c7cd" strokeDasharray="1 1" />
      </svg>
      <button className="mt-[212px] rotate-180 [writing-mode:vertical-rl]">DesignCenter</button>
    </aside>
    <main className="relative flex flex-1 flex-col">
      <Drawing />
      <div className="flex items-center justify-between pl-1 pr-2.5 pt-1 text-[#e6e9ec]">
        <button className="leading-[14px]">[−][Top][2D Wireframe]</button>
        <div className="flex gap-2.5">
          <button aria-label="Minimize drawing">
            <svg className="size-[9px]" viewBox="0 0 9 9"><path d="M0 7h9" stroke="#fff" strokeWidth="3" /></svg>
          </button>
          <button aria-label="Restore drawing">
            <svg className="size-[9px]" viewBox="0 0 9 9" fill="none" stroke="#fff"><path d="M1 3h5v5H1z" strokeWidth="2" /><path d="M2.500 0.500h6v6" /></svg>
          </button>
          <button aria-label="Close drawing">
            <svg className="size-[9px]" viewBox="0 0 9 9"><path d="M1 1l7 7M8 1L1 8" stroke="#fff" strokeWidth="2" /></svg>
          </button>
        </div>
      </div>
      <ViewCube />
      <CommandLine />
      <svg className="absolute bottom-2.5 left-3 h-[70px] w-[70px]" viewBox="0 0 70 70" fill="none" stroke="#dfe2e5" aria-hidden="true">
        <path d="M4.500 18v46.500H51M.5 60.500h8v8h-8zM56 51l11 12M67 51L56 63M6 2l5.500 6L17 2M11.500 8v6" />
      </svg>
    </main>
  </div>
);

const statusBase = 'flex h-[22px] shrink-0 items-center justify-center whitespace-nowrap';

const StatusButton = ({ icon, label, width, on = false, menu = false, children }) => (
  <button aria-label={label} aria-pressed={on} className={`${statusBase} bg-[#39424f] ${width}`}>
    {icon && (
      <span className={`flex h-[21px] shrink-0 items-center justify-center ${on ? 'w-[21px] bg-[#5c8cbe]' : 'w-5'}`}>
        <Icon name={icon} />
      </span>
    )}
    {children}
    {menu && <span className="flex w-[15px] justify-center"><Caret wide /></span>}
  </button>
);

const StatusBar = () => (
  <footer className="flex h-[27px] shrink-0 items-start pl-[11px] pt-px">
    <IconButton name="menu" label="Layout menu" size={14} />
    <span className="w-1.5" />
    <button className="h-[22px] w-16 bg-[#3b4453] font-bold text-white [clip-path:polygon(9px_0,100%_0,calc(100%-9px)_100%,0_100%)]">Model</button>
    <button className="h-[22px] w-10">Work</button>
    <span className="flex h-[22px] items-center"><Slash /></span>
    <button className="h-[22px] w-[54px]">Layout1</button>
    <span className="flex h-[22px] items-center"><Slash /></span>
    <IconButton name="plus" label="New layout" width="w-8" size={14} />
    <span className="flex h-[22px] items-center"><Slash /></span>
    <div className="ml-auto flex gap-0.5 pr-px pt-px">
      <span className={`${statusBase} w-[132px] bg-[#343c4b]`}>
        <span className="w-full pr-1.5 text-right">63058, 64378, 0</span>
      </span>
      <StatusButton width="w-[45px]">MODEL</StatusButton>
      <StatusButton icon="stGrid" label="Grid" width="w-[21px]" on />
      <StatusButton icon="stSnap" label="Snap" width="w-[38px]" menu />
      <StatusButton icon="stDyn" label="Dynamic input" width="w-[22px]" on />
      <StatusButton icon="stOrtho" label="Ortho" width="w-5" on />
      <StatusButton icon="stPolar" label="Polar" width="w-9" menu />
      <StatusButton icon="stIso" label="Isometric drafting" width="w-9" on menu />
      <StatusButton icon="stTrack" label="Object snap tracking" width="w-[21px]" on />
      <StatusButton icon="stSnapObj" label="Object snap" width="w-9" on menu />
      <StatusButton icon="stWeight" label="Lineweight" width="w-[22px]" on />
      <StatusButton icon="stTransp" label="Transparency" width="w-[23px]" />
      <StatusButton icon="stAnno" label="Annotation visibility" width="w-5" on />
      <StatusButton icon="stAnno2" label="Auto scale" width="w-[21px]" on />
      <StatusButton icon="stAnno3" label="Annotation scale" width="w-[54px]" menu>
        <span className="ml-0.5">1:1</span>
      </StatusButton>
      <StatusButton icon="gear" label="Workspace" width="w-[37px]" menu />
      <StatusButton icon="plus" label="Annotation monitor" width="w-[23px]" />
      <StatusButton width="w-[70px]" menu>High Detail</StatusButton>
      <StatusButton icon="elevPlane" label="Cut plane" width="w-[59px]">
        <span className="ml-1">1400</span>
      </StatusButton>
      <StatusButton icon="replaceZ" label="Elevation" width="w-[42px]">
        <span className="ml-0.5">+0</span>
      </StatusButton>
      <StatusButton icon="shapes" label="Quick properties" width="w-[27px]" />
      <StatusButton icon="hatchBox" label="Hardware acceleration" width="w-[22px]" on />
      <StatusButton icon="surface" label="Surface hatch" width="w-[22px]" on />
      <StatusButton icon="cad" label="Standards" width="w-6" />
      <StatusButton icon="printer" label="Plot status" width="w-7" />
      <StatusButton icon="isolate" label="Isolate" width="w-4" />
      <StatusButton icon="menu" label="Customization" width="w-[23px]" />
    </div>
  </footer>
);

const App = () => (
  <div className="flex h-screen flex-col overflow-hidden border-b-2 border-black bg-[#222930] font-['Open_Sans',sans-serif] text-[11px] leading-4 text-[#dde1e6]">
    <TitleBar />
    <RibbonTabs />
    <Ribbon />
    <DocumentTabs />
    <div className="h-[5px] shrink-0 bg-[#3b4453]" />
    <Canvas />
    <div className="h-1 shrink-0 bg-[#3b4453]" />
    <StatusBar />
  </div>
);

export default App;
